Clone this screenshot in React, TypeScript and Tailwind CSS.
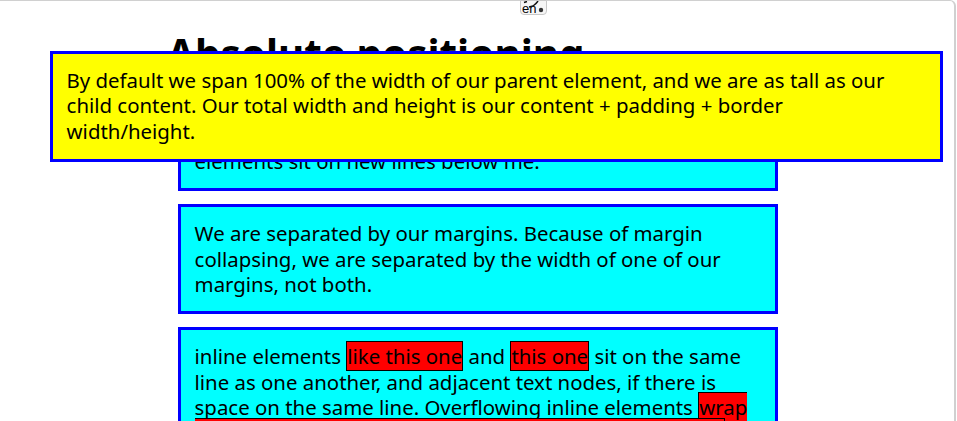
export default function App() {
  const font = "font-['Noto_Sans','Open_Sans',sans-serif]";
  const box = "border-[3px] border-[#0000ff] bg-[#00ffff] p-[13.6px]";
  const red = "bg-[#ff0000] border border-black";
  return (
    <div className={`relative h-[421px] w-[957px] overflow-hidden bg-white text-black ${font} text-[20.4px] leading-[25.6px]`}>
      <div className="h-[421px] w-[956px] rounded-tr-[6px] border-r-2 border-t border-[#d0d0d0]">
        <div className="ml-[178px] flex w-[600px] flex-col gap-[13px]">
          <h1 className="-ml-[11px] mt-[28px] h-[65px] text-[40.4px] font-bold leading-[50px] whitespace-nowrap">Absolute positioning</h1>
          <p className={box}>I am a basic block level element. My adjacent block level elements sit on new lines below me.</p>
          <p className={box}>We are separated by our margins. Because of margin collapsing, we are separated by the width of one of our margins, not both.</p>
          <p className={box}>
            inline elements <span className={red}>like this one</span> and <span className={red}>this one</span> sit on the same line as one another, and adjacent text nodes, if there is space on the same line. Overflowing inline elements <span className={red}>wrap onto a new line if possible (like this one containing text)</span>, or just go on to a new line if not, much like this image will do:
          </p>
        </div>
      </div>
      <p className="absolute left-[50px] top-[51px] h-[111px] w-[893px] border-[3px] border-[#0000ff] bg-[#ffff00] p-[13.6px]">
        By default we span 100% of the width of our parent element, and we are as tall as our child content. Our total width and height is our content + padding + border<br />width/height.
      </p>
      <div className="absolute left-[520px] top-0 h-[15px] w-[27px] rounded-b-[4px] border border-[#c8c8c8] bg-[#f6f6f6]">
        <span className="absolute left-[1px] top-[2px] text-[13px] leading-[12px] font-['Liberation_Sans',sans-serif]">en</span>
        <svg className="absolute left-0 top-0" width="25" height="13" viewBox="0 0 25 13" fill="none">
          <path d="M3 1.5 L6 0.5 M8 6 L12 5 Q15 3 17 0" stroke="#111" strokeWidth="1.5" />
          <circle cx="20" cy="9" r="2.2" fill="#333" />
        </svg>
      </div>
    </div>
  );
}
